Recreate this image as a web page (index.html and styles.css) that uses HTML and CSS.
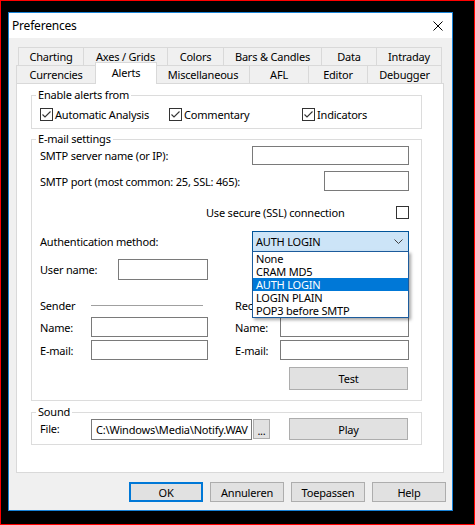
FILE: index.html
```html
<!DOCTYPE html>
<html lang="en">
<head>
    <meta charset="UTF-8">
    <title>Preferences</title>
<link rel="stylesheet" href="styles.css">
</head>
<body>
    <div class="dialog">
        <div class="titlebar">
            <span class="title">Preferences</span>
            <svg class="close" width="10" height="10" viewBox="0 0 10 10"><path d="M0.5 0.5 L9.5 9.5 M9.5 0.5 L0.5 9.5"/></svg>
        </div>

        <div class="tabs">
            <div class="tab-row back">
                <div class="tab">Charting</div>
                <div class="tab">Axes / Grids</div>
                <div class="tab">Colors</div>
                <div class="tab">Bars &amp; Candles</div>
                <div class="tab">Data</div>
                <div class="tab">Intraday</div>
            </div>
            <div class="tab-row front">
                <div class="tab">Currencies</div>
                <div class="tab active">Alerts</div>
                <div class="tab">Miscellaneous</div>
                <div class="tab">AFL</div>
                <div class="tab">Editor</div>
                <div class="tab">Debugger</div>
            </div>

            <div class="panel">
                <fieldset class="group group-enable">
                    <legend>Enable alerts from</legend>
                    <div class="group-body">
                        <label class="check"><span class="box"><svg viewBox="0 0 11 11"><path d="M1.5 5.5 L4 8 L9.5 2.5"/></svg></span>Automatic Analysis</label>
                        <label class="check"><span class="box"><svg viewBox="0 0 11 11"><path d="M1.5 5.5 L4 8 L9.5 2.5"/></svg></span>Commentary</label>
                        <label class="check"><span class="box"><svg viewBox="0 0 11 11"><path d="M1.5 5.5 L4 8 L9.5 2.5"/></svg></span>Indicators</label>
                    </div>
                </fieldset>

                <fieldset class="group group-mail">
                    <legend>E-mail settings</legend>
                    <div class="group-body">
                        <div class="row row-server">
                            <span>SMTP server name (or IP):</span>
                            <div class="field field-server"></div>
                        </div>
                        <div class="row row-port">
                            <span>SMTP port (most common: 25, SSL: 465):</span>
                            <div class="field field-port"></div>
                        </div>
                        <div class="row row-ssl">
                            <span class="ssl-label">Use secure (SSL) connection</span>
                            <span class="box empty"></span>
                        </div>
                        <div class="row row-auth">
                            <span>Authentication method:</span>
                            <div class="combo">
                                <span>AUTH LOGIN</span>
                                <svg class="chevron" width="9" height="5" viewBox="0 0 9 5"><path d="M0.5 0.5 L4.5 4.5 L8.5 0.5"/></svg>
                                <ul class="dropdown">
                                    <li>None</li>
                                    <li>CRAM MD5</li>
                                    <li class="selected">AUTH LOGIN</li>
                                    <li>LOGIN PLAIN</li>
                                    <li>POP3 before SMTP</li>
                                </ul>
                            </div>
                        </div>
                        <div class="row row-user">
                            <span class="user-label">User name:</span>
                            <div class="field field-user"></div>
                        </div>
                        <div class="row row-heads">
                            <div class="col col-left">
                                <span>Sender</span>
                                <span class="rule rule-left"></span>
                            </div>
                            <div class="col col-right">
                                <span>Recipient</span>
                                <span class="rule rule-right"></span>
                            </div>
                        </div>
                        <div class="row row-person">
                            <div class="col col-left">
                                <span>Name:</span>
                                <div class="field field-left"></div>
                            </div>
                            <div class="col col-right">
                                <span>Name:</span>
                                <div class="field field-right"></div>
                            </div>
                        </div>
                        <div class="row row-mail">
                            <div class="col col-left">
                                <span>E-mail:</span>
                                <div class="field field-left"></div>
                            </div>
                            <div class="col col-right">
                                <span>E-mail:</span>
                                <div class="field field-right"></div>
                            </div>
                        </div>
                        <div class="row row-test">
                            <button class="btn btn-wide">Test</button>
                        </div>
                    </div>
                </fieldset>

                <fieldset class="group group-sound">
                    <legend>Sound</legend>
                    <div class="group-body">
                        <span class="file-label">File:</span>
                        <div class="field field-file">C:\Windows\Media\Notify.WAV</div>
                        <button class="btn btn-browse">...</button>
                        <button class="btn btn-wide btn-play">Play</button>
                    </div>
                </fieldset>
            </div>
        </div>

        <div class="footer">
            <button class="btn btn-footer default">OK</button>
            <button class="btn btn-footer">Annuleren</button>
            <button class="btn btn-footer">Toepassen</button>
            <button class="btn btn-footer">Help</button>
        </div>
    </div>
</body>
</html>
```

FILE: styles.css
```css
:root {
    --window-border: #1883d7;
    --face: #f0f0f0;
    --tab-border: #d9d9d9;
    --group-border: #dcdcdc;
    --field-border: #7a7a7a;
    --button-face: #e1e1e1;
    --button-border: #adadad;
    --accent: #0078d7;
    --combo-face: #cce4f7;
    --combo-border: #005499;
}

* {
    box-sizing: border-box;
}

body {
    margin: 0;
    width: 475px;
    height: 525px;
    padding: 11px 0 0 7px;
    background-color: #000;
    border: 1px solid #ff0000;
    font-family: "Noto Sans", "Liberation Sans", sans-serif;
    font-size: 11px;
    letter-spacing: -0.2px;
    color: #000;
    overflow: hidden;
}

.dialog {
    width: 445px;
    height: 499px;
    background-color: var(--face);
    border: 1px solid var(--window-border);
}

.titlebar {
    display: flex;
    align-items: center;
    height: 25px;
    padding: 0 9px 0 3px;
    background-color: #fff;
}

.title {
    flex-grow: 1;
    font-size: 12px;
}

.close path {
    stroke: #000;
    stroke-width: 1;
    fill: none;
}

/* tab control */
.tabs {
    margin: 9px 0 0 7px;
    width: 428px;
}

.tab-row {
    display: flex;
    height: 18px;
}

.tab-row.back {
    margin-left: 2px;
}

.tab {
    display: flex;
    align-items: center;
    justify-content: center;
    height: 18px;
    border: 1px solid var(--tab-border);
    border-right: none;
    border-bottom: none;
    background-color: var(--face);
    white-space: nowrap;
}

.tab:last-child {
    border-right: 1px solid var(--tab-border);
}

.back .tab:nth-child(1) { width: 65px; }
.back .tab:nth-child(2) { width: 84px; }
.back .tab:nth-child(3) { width: 56px; }
.back .tab:nth-child(4) { width: 98px; }
.back .tab:nth-child(5) { width: 55px; }
.back .tab:nth-child(6) { width: 66px; }

.front .tab:nth-child(1) { width: 79px; }
.front .tab:nth-child(2) { width: 62px; }
.front .tab:nth-child(3) { width: 92px; }
.front .tab:nth-child(4) { width: 59px; }
.front .tab:nth-child(5) { width: 59px; }
.front .tab:nth-child(6) { width: 75px; }

.tab-row.front {
    align-items: flex-end;
}

.tab.active {
    position: relative;
    z-index: 1;
    height: 22px;
    margin-top: -3px;
    margin-bottom: -1px;
    padding-bottom: 3px;
    background-color: #fff;
    border-right: 1px solid var(--tab-border);
}

.tab.active + .tab {
    border-left: none;
}

.panel {
    height: 390px;
    padding: 4px 0 0 14px;
    background-color: #fff;
    border: 1px solid var(--tab-border);
}

/* group boxes */
.group {
    width: 391px;
    margin: 0;
    padding: 0;
    min-width: 0;
    border: 1px solid var(--group-border);
}

.group legend {
    margin-left: 4px;
    padding: 0 2px;
    line-height: 14px;
}

.group-mail {
    margin-top: 3px;
}

.group-sound {
    margin-top: 4px;
}

.group-enable .group-body {
    display: flex;
    height: 26px;
    padding: 5px 0 7px 8px;
}

.check {
    display: flex;
    align-items: center;
    height: 14px;
}

.check:nth-child(1) { width: 129px; }
.check:nth-child(2) { width: 133px; }

.box {
    display: inline-block;
    width: 13px;
    height: 13px;
    margin-right: 2px;
    border: 1px solid #333;
    background-color: #fff;
}

.box svg {
    display: block;
    width: 11px;
    height: 11px;
}

.box path {
    fill: none;
    stroke: #333;
    stroke-width: 1.1;
}

.group-mail .group-body {
    padding: 0 12px 10px 8px;
}

.row {
    display: flex;
    align-items: center;
}

.field {
    height: 20px;
    background-color: #fff;
    border: 1px solid var(--field-border);
}

.row-server { height: 19px; justify-content: space-between; }
.field-server { width: 157px; height: 19px; }

.row-port { height: 20px; margin-top: 6px; justify-content: space-between; }
.field-port { width: 85px; }

.row-ssl { height: 14px; margin-top: 14px; }
.ssl-label { padding-left: 166px; }
.row-ssl .box { margin: 0 0 0 auto; }

.row-auth { height: 21px; margin-top: 12px; justify-content: space-between; }

.combo {
    position: relative;
    display: flex;
    align-items: center;
    justify-content: space-between;
    width: 157px;
    height: 21px;
    padding: 0 5px 0 3px;
    background-color: var(--combo-face);
    border: 1px solid var(--combo-border);
}

.chevron path {
    fill: none;
    stroke: #404040;
    stroke-width: 1;
}

.dropdown {
    position: absolute;
    top: 100%;
    left: -1px;
    z-index: 2;
    width: 157px;
    margin: 0;
    padding: 0;
    list-style: none;
    background-color: #fff;
    border: 1px solid #1c5b9c;
    box-shadow: 2px 2px 3px rgba(0, 0, 0, 0.35);
}

.dropdown li {
    height: 13px;
    line-height: 13px;
    padding-left: 3px;
    overflow: hidden;
}

.dropdown li.selected {
    background-color: var(--accent);
    color: #fff;
}

.row-user { height: 21px; margin-top: 7px; }
.user-label { width: 78px; }
.field-user { width: 90px; height: 21px; }

.col {
    display: flex;
    align-items: center;
}

.col-left { width: 195px; }
.col-right { width: 174px; }

.col-left > span:first-child { width: 51px; }
.col-right > span:first-child { width: 45px; }

.row-heads { height: 14px; margin-top: 18px; }

.rule {
    height: 1px;
    background-color: #a0a0a0;
}

.rule-left { width: 112px; }
.rule-right { width: 112px; margin-left: 10px; }

.row-person { height: 20px; margin-top: 5px; }
.row-mail { height: 20px; margin-top: 3px; }

.field-left { width: 117px; }
.field-right { width: 129px; }

.btn {
    font-family: inherit;
    font-size: 11px;
    letter-spacing: inherit;
    color: #000;
    padding: 0;
    background-color: var(--button-face);
    border: 1px solid var(--button-border);
}

.btn-wide {
    width: 119px;
    height: 23px;
}

.row-test {
    height: 23px;
    margin-top: 7px;
    justify-content: flex-end;
    padding-right: 1px;
}

.group-sound .group-body {
    display: flex;
    align-items: flex-start;
    height: 25px;
    padding: 0 12px 4px 8px;
}

.file-label {
    width: 51px;
    line-height: 19px;
}

.field-file {
    width: 161px;
    height: 21px;
    padding-left: 4px;
    line-height: 19px;
    white-space: nowrap;
    overflow: hidden;
}

.btn-browse {
    width: 17px;
    height: 20px;
    margin-left: 1px;
    line-height: 12px;
    padding-top: 4px;
}

.btn-play {
    height: 22px;
    margin: -1px 0 0 19px;
}

/* dialog buttons */
.footer {
    display: flex;
    justify-content: flex-end;
    gap: 7px;
    margin-top: 9px;
    padding-right: 6px;
}

.btn-footer {
    width: 74px;
    height: 20px;
}

.btn-footer.default {
    border: 2px solid var(--accent);
}
```
